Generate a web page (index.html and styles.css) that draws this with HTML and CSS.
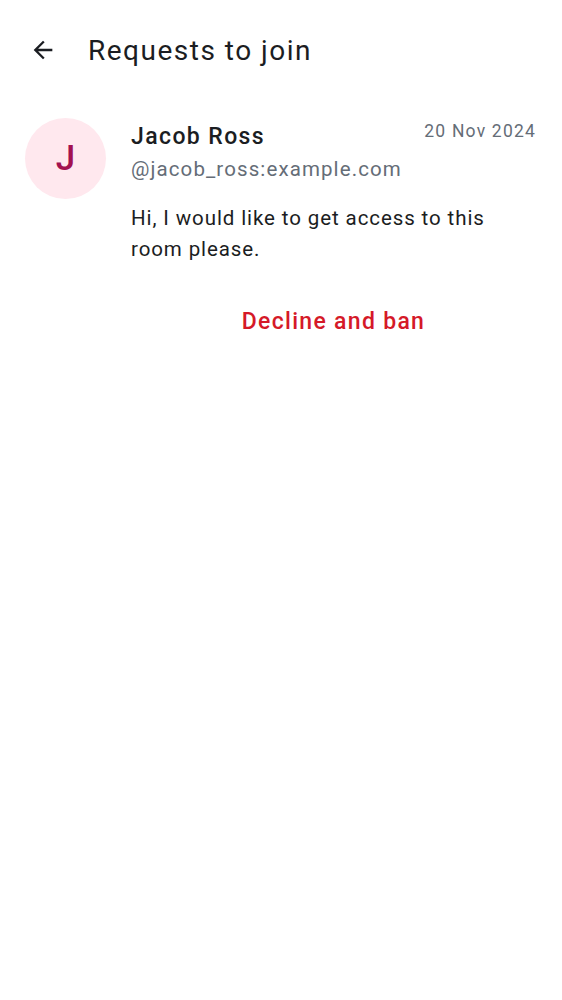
FILE: index.html
```html
<!DOCTYPE html>
<html>
<head>
<meta charset="utf-8">
<link rel="stylesheet" href="styles.css">
</head>
<body>
<header class="topbar">
  <button class="back" aria-label="Back">
    <svg width="28" height="28" viewBox="0 0 24 24"><path d="M20 11H7.83l5.59-5.59L12 4l-8 8 8 8 1.41-1.41L7.83 13H20v-2z" fill="#1b1d22"/></svg>
  </button>
  <h1 class="title">Requests to join</h1>
</header>
<main class="list">
  <section class="request">
    <div class="avatar">J</div>
    <div class="content">
      <div class="head">
        <div class="names">
          <div class="name">Jacob Ross</div>
          <div class="handle">@jacob_ross:example.com</div>
        </div>
        <div class="date">20 Nov 2024</div>
      </div>
      <p class="message">Hi, I would like to get access to this room please.</p>
      <div class="actions">
        <button class="decline">Decline and ban</button>
      </div>
    </div>
  </section>
</main>
</body>
</html>
```
FILE: styles.css
```css
html, body {
  margin: 0;
  padding: 0;
  background: #ffffff;
  font-family: Roboto, sans-serif;
  color: #1b1d22;
}
.topbar {
  display: flex;
  align-items: center;
  height: 100px;
  padding-left: 27px;
  box-sizing: border-box;
}
.back {
  background: none;
  border: none;
  padding: 0;
  width: 32px;
  height: 32px;
  display: flex;
  align-items: center;
  justify-content: center;
  margin-right: 29px;
}
.title {
  margin: 0;
  font-size: 28px;
  font-weight: 400;
  letter-spacing: 1.5px;
}
.request {
  display: flex;
  padding: 18px 26px 0 25px;
}
.avatar {
  flex: none;
  width: 81px;
  height: 81px;
  border-radius: 50%;
  background: #ffe8ee;
  color: #a3114f;
  font-size: 35px;
  font-weight: 500;
  display: flex;
  align-items: center;
  justify-content: center;
  margin-right: 25px;
}
.content {
  flex: 1;
  min-width: 0;
}
.head {
  display: flex;
  justify-content: space-between;
  align-items: flex-start;
}
.name {
  font-size: 23px;
  font-weight: 500;
  letter-spacing: 1.4px;
  line-height: 32px;
  margin-top: 3px;
}
.handle {
  font-size: 20.5px;
  color: #656d77;
  letter-spacing: 1.1px;
  line-height: 30px;
  margin-top: 1px;
}
.date {
  font-size: 17.5px;
  color: #656d77;
  letter-spacing: 1.2px;
  line-height: 24px;
  margin-top: 1px;
}
.message {
  margin: 19px 0 0 0;
  font-size: 20.5px;
  letter-spacing: 0.9px;
  line-height: 31px;
  padding-right: 20px;
}
.actions {
  display: flex;
  justify-content: center;
  margin-top: 41px;
}
.decline {
  background: none;
  border: none;
  font-family: Roboto, sans-serif;
  font-size: 23px;
  font-weight: 500;
  letter-spacing: 1.3px;
  color: #d51928;
  padding: 0;
  line-height: 32px;
}
```
